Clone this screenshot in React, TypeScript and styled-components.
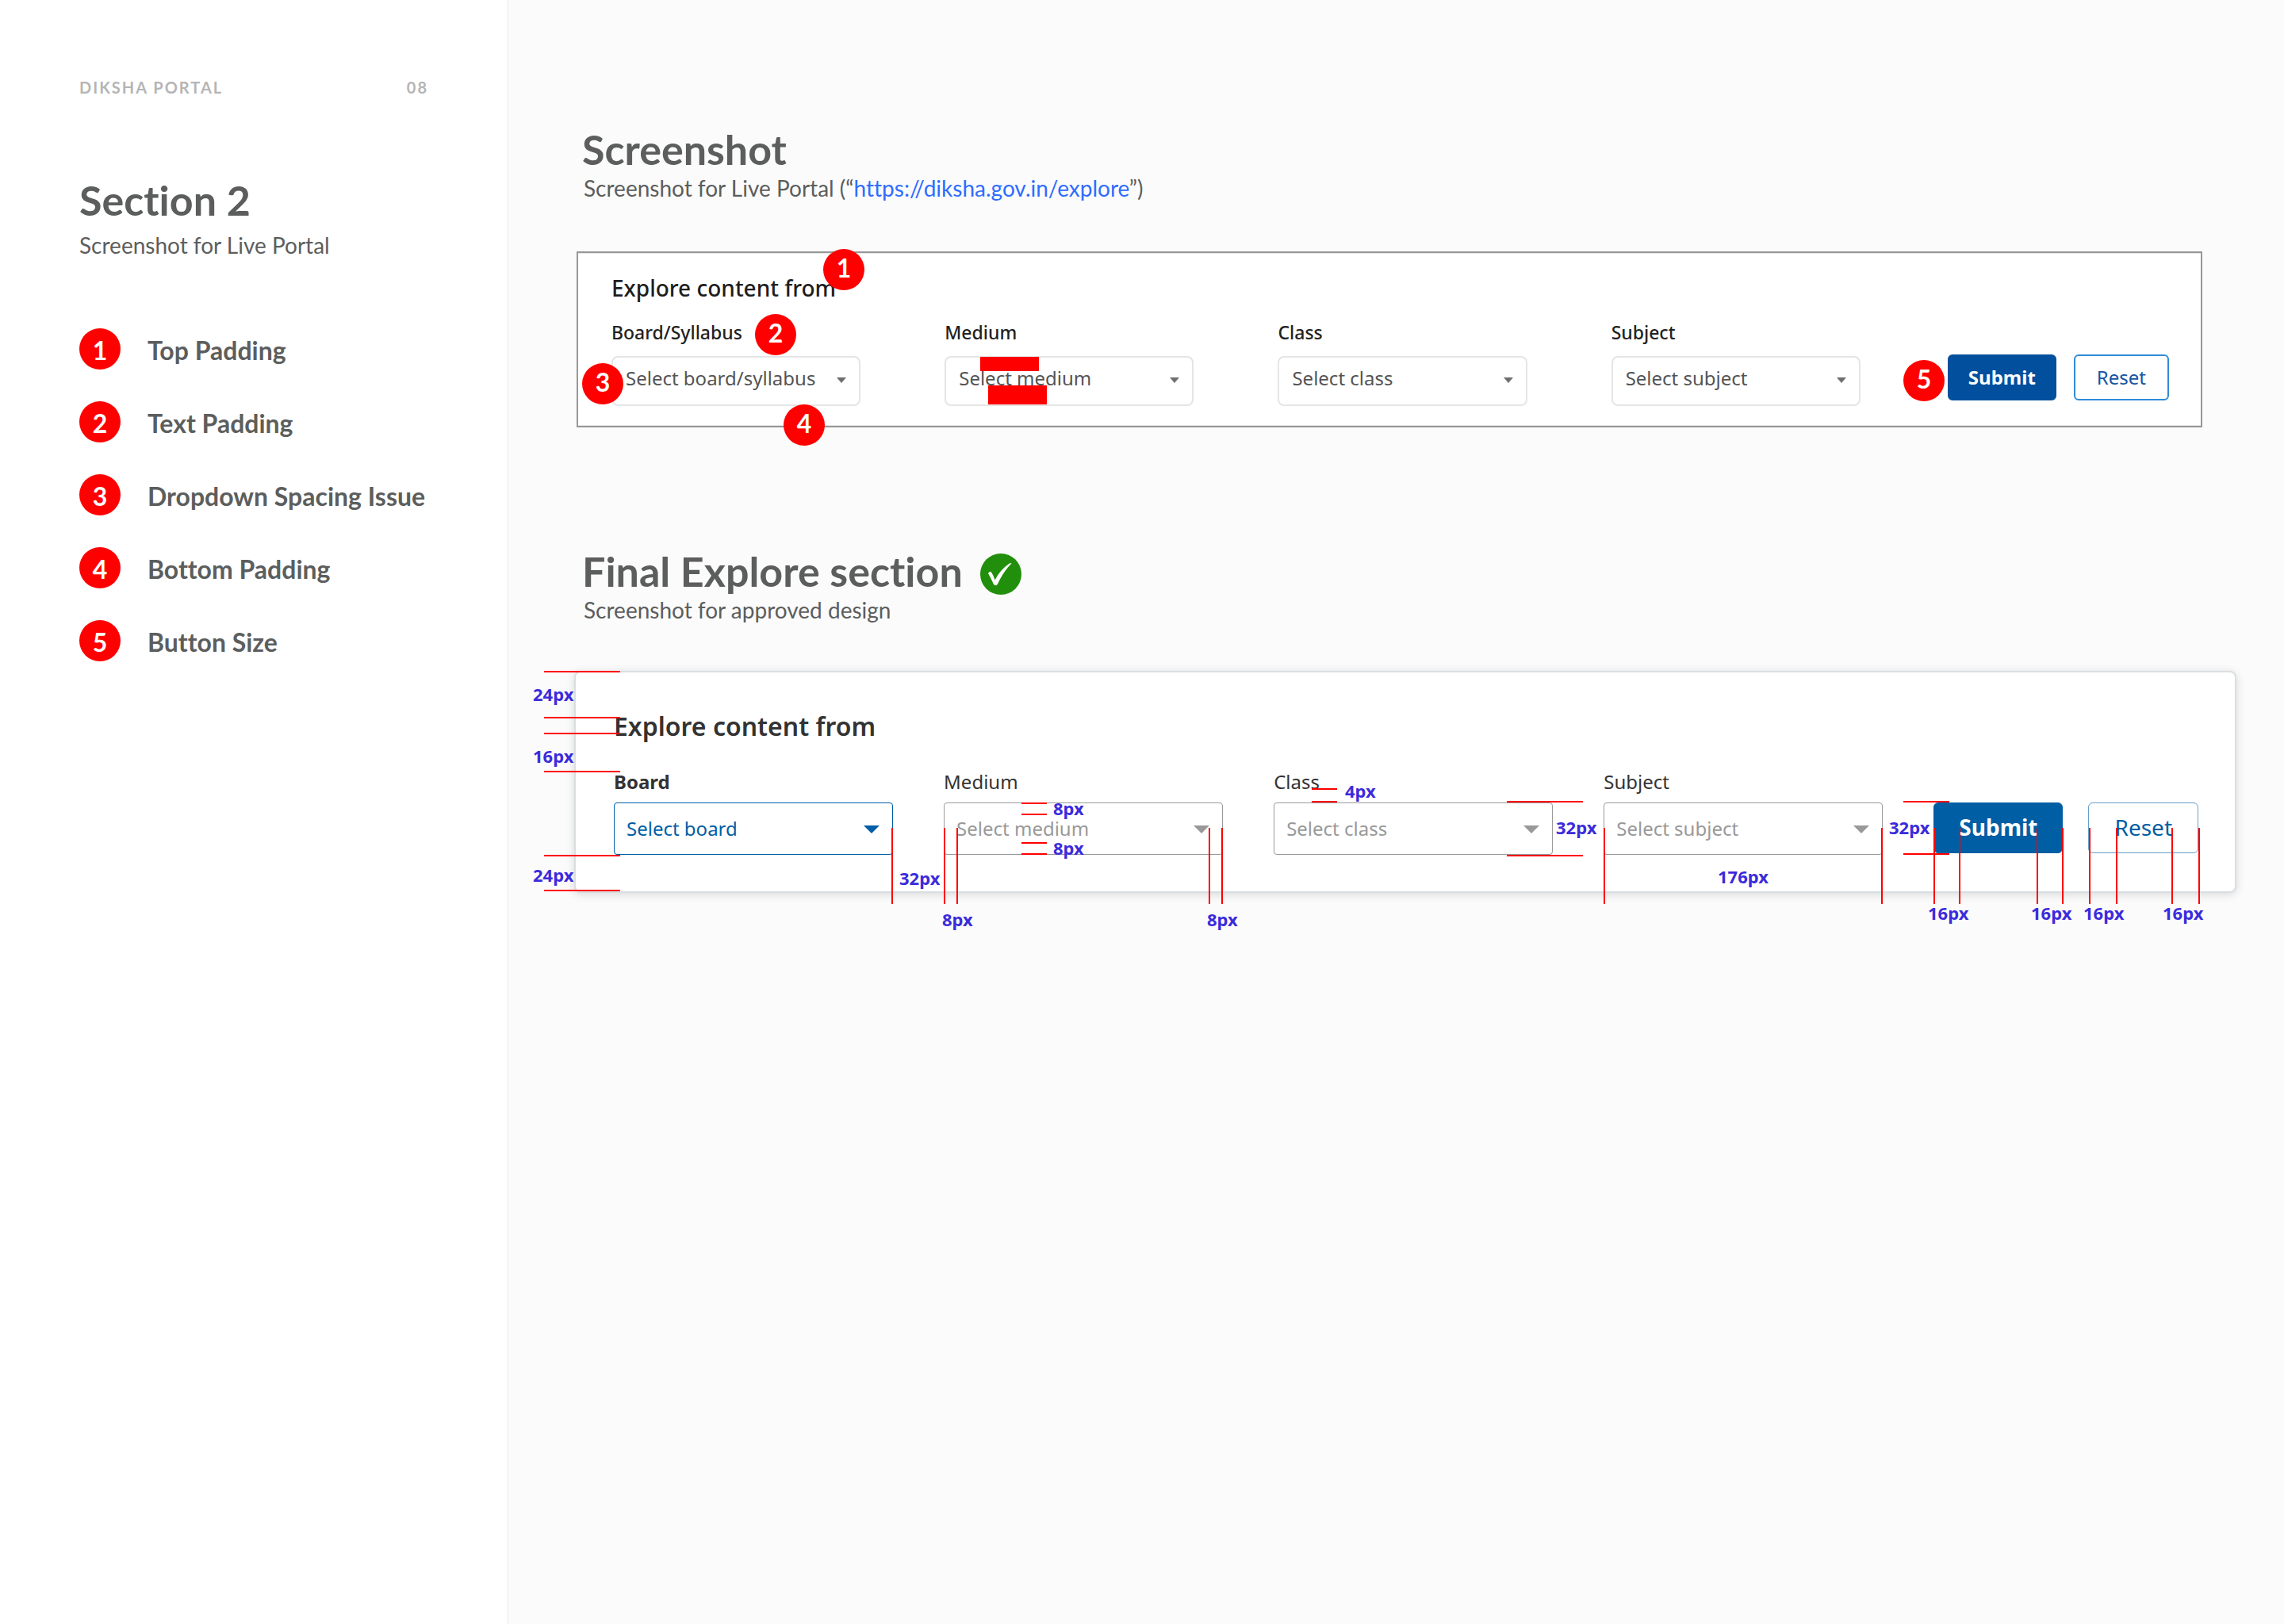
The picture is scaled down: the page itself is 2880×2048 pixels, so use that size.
import React from "react";
import styled, { createGlobalStyle, css } from "styled-components";

const GlobalStyle = createGlobalStyle`
  *, *::before, *::after { box-sizing: border-box; }
  body {
    margin: 0;
    background: #fbfbfb;
    font-family: Lato, "Liberation Sans", sans-serif;
    font-variant-ligatures: none;
    color: #5c5e5d;
  }
  h1, h2, h3, p, ol { margin: 0; padding: 0; }
`;

const noto = `"Noto Sans", "Open Sans", sans-serif`;

const Page = styled.div`
  display: flex;
  min-height: 100vh;
`;

/* ---------- sidebar ---------- */

const Sidebar = styled.aside`
  flex: none;
  width: 641px;
  padding: 98px 100px;
  background: #fff;
  border-right: 1px solid #ececec;
`;

const RunningHead = styled.div`
  display: flex;
  justify-content: space-between;
  margin-bottom: 98px;
  font-size: 20px;
  font-weight: 700;
  line-height: 24px;
  letter-spacing: 2px;
  color: #b5b5b5;
`;

const Title = styled.h2`
  font-size: 52px;
  font-weight: 700;
  line-height: 64px;
`;

const Subtitle = styled.p`
  font-size: 28px;
  line-height: 34px;
`;

const SidebarSubtitle = styled(Subtitle)`
  margin: 8px 0 88px;
`;

const IssueList = styled.ol`
  display: flex;
  flex-direction: column;
  gap: 40px;
  list-style: none;
`;

const IssueItem = styled.li`
  display: flex;
  gap: 34px;
  height: 52px;
  font-size: 32px;
  font-weight: 700;
  line-height: 56px;
  white-space: nowrap;
`;

const Badge = styled.span`
  flex: none;
  width: 52px;
  height: 52px;
  border-radius: 50%;
  background: #f00;
  color: #fff;
  font-size: 32px;
  font-weight: 700;
  text-align: center;
`;

/* ---------- main column ---------- */

const Main = styled.main`
  flex: 1;
  min-width: 0;
  padding: 156px 60px 100px 83px;
`;

const Block = styled.section`
  & + & { margin-top: 149px; }
`;

const BlockHead = styled.header`
  padding-left: 10px;
  margin-bottom: 60px;
`;

const TitleRow = styled.div`
  display: flex;
  align-items: flex-end;
  gap: 22px;
`;

const BlockSubtitle = styled(Subtitle)`
  padding-left: 2px;
`;

const Link = styled.a`
  color: #2f6cff;
  text-decoration: none;
`;

const CheckMark = styled.svg`
  width: 52px;
  height: 52px;
  margin-bottom: 2px;
`;

/* ---------- explore panels ---------- */

type Look = "live" | "final";

const Panel = styled.div<{ $look: Look }>`
  position: relative;
  background: #fff;
  font-family: ${noto};
  ${({ $look }) =>
    $look === "live"
      ? css`
          margin: 63px 43px 0 3px;
          padding: 24px 40px 25px 42px;
          border: 2px solid #979797;
          box-shadow: inset 0 1px #e6e6e6, inset 0 -1px #e6e6e6;
        `
      : css`
          padding: 48px 46px 46px 48px;
          border: 2px solid #d9dee2;
          border-radius: 8px;
          box-shadow: 0 2px 12px rgba(0, 0, 0, 0.14);
        `}
`;

const PanelTitle = styled.h3<{ $look: Look }>`
  line-height: 40px;
  ${({ $look }) =>
    $look === "live"
      ? css`
          margin-bottom: 20px;
          font-size: 28px;
          font-weight: 500;
          color: #1e1e1e;
        `
      : css`
          margin-bottom: 34px;
          font-size: 32px;
          font-weight: 600;
          color: #333;
        `}
`;

const FilterForm = styled.form<{ $look: Look }>`
  display: grid;
  grid-template-columns: repeat(4, minmax(0, 1fr)) auto;
  align-items: end;
  column-gap: ${({ $look }) => ($look === "live" ? 106 : 64)}px;
`;

const Field = styled.div<{ $look: Look }>`
  display: flex;
  flex-direction: column;
  gap: ${({ $look }) => ($look === "live" ? 14 : 10)}px;
`;

const FieldLabel = styled.label<{ $look: Look; $active: boolean }>`
  font-size: ${({ $look }) => ($look === "live" ? 23 : 24)}px;
  line-height: 32px;
  font-weight: ${({ $look, $active }) => ($active ? 700 : $look === "live" ? 500 : 400)};
  color: ${({ $look }) => ($look === "live" ? "#222" : "#333")};
`;

const SelectWrap = styled.div`
  position: relative;
  display: flex;
`;

const Select = styled.select<{ $look: Look; $active: boolean }>`
  appearance: none;
  width: 100%;
  margin: 0;
  background: #fff;
  font-family: ${noto};
  font-size: 24px;
  ${({ $look, $active }) =>
    $look === "live"
      ? css`
          height: 63px;
          padding: 0 40px 8px 16px;
          border: 2px solid #e5e5e5;
          border-radius: 8px;
          color: #545454;
        `
      : css`
          height: 66px;
          padding: 0 44px 2px 15px;
          border: 1px solid ${$active ? "#005ea5" : "#999"};
          border-radius: 4px;
          color: ${$active ? "#005ea5" : "#999"};
        `}
`;

const Caret = styled.svg<{ $look: Look; $active: boolean }>`
  position: absolute;
  pointer-events: none;
  ${({ $look, $active }) =>
    $look === "live"
      ? css`
          top: 27px;
          right: 18px;
          width: 12px;
          height: 7px;
          fill: #6e6e6e;
        `
      : css`
          top: 29px;
          right: 17px;
          width: 20px;
          height: 10px;
          fill: ${$active ? "#005ea5" : "#999"};
        `}
`;

const Actions = styled.div<{ $look: Look }>`
  display: flex;
  ${({ $look }) =>
    $look === "live"
      ? css`
          gap: 22px;
          margin: 0 0 7px 4px;
        `
      : css`
          gap: 32px;
          margin-bottom: 2px;
        `}
`;

const Button = styled.button<{ $look: Look; $primary?: boolean }>`
  margin: 0;
  border-radius: 6px;
  border-style: solid;
  font-family: ${noto};
  font-weight: ${({ $primary }) => ($primary ? 700 : 400)};
  ${({ $look, $primary }) =>
    $look === "live"
      ? css`
          height: 58px;
          padding: 0 ${$primary ? 24 : 27}px 2px;
          border-width: 2px;
          border-color: ${$primary ? "#024f9d" : "#2f8bd8"};
          background: ${$primary ? "#024f9d" : "#fff"};
          color: ${$primary ? "#fff" : "#1454a2"};
          font-size: 24px;
        `
      : css`
          height: 64px;
          padding: 0 ${$primary ? 31 : 32}px 2px;
          border-width: 1px;
          border-color: ${$primary ? "#005ea5" : "#669ec9"};
          background: ${$primary ? "#005ea5" : "#fff"};
          color: ${$primary ? "#fff" : "#005ea5"};
          font-size: 28px;
        `}
`;

/* ---------- annotations laid over the panels ---------- */

type Spot = { $x: number; $y: number };

const Pin = styled(Badge)<Spot>`
  position: absolute;
  left: ${({ $x }) => $x}px;
  top: ${({ $y }) => $y}px;
  font-family: Lato, sans-serif;
  line-height: 48px;
`;

const Strip = styled.span<Spot & { $w: number; $h: number }>`
  position: absolute;
  left: ${({ $x }) => $x}px;
  top: ${({ $y }) => $y}px;
  width: ${({ $w }) => $w}px;
  height: ${({ $h }) => $h}px;
  background: #f00;
`;

const Measure = styled.span<Spot>`
  position: absolute;
  left: ${({ $x }) => $x}px;
  top: ${({ $y }) => $y}px;
  font-size: 22px;
  font-weight: 700;
  line-height: 22px;
  color: #3b2bdb;
`;

const issues = [
  "Top Padding",
  "Text Padding",
  "Dropdown Spacing Issue",
  "Bottom Padding",
  "Button Size",
];

const pins = [
  [309, -5],
  [223, 77],
  [5, 139],
  [259, 191],
  [1671, 135],
];

const blocks = [
  [507, 131, 74, 18],
  [517, 167, 74, 24],
];

// x, y, length
const rules = [
  [-40, -2, 96],
  [-40, 56, 96],
  [-40, 76, 96],
  [-40, 124, 96],
  [-40, 230, 96],
  [-40, 274, 96],
  [562, 164, 32],
  [562, 178, 32],
  [562, 214, 32],
  [562, 228, 32],
  [928, 146, 32],
  [928, 162, 32],
  [1174, 162, 96],
  [1174, 230, 96],
  [1674, 162, 58],
  [1674, 228, 58],
];

const uprights = [
  398, 464, 480, 798, 814, 1296, 1646, 1712, 1744, 1842, 1874, 1908, 1942, 2012, 2046,
];

const measures: [string, number, number][] = [
  ["24px", -54, 16],
  ["16px", -54, 94],
  ["24px", -54, 244],
  ["32px", 408, 248],
  ["8px", 462, 300],
  ["8px", 796, 300],
  ["8px", 602, 160],
  ["8px", 602, 210],
  ["4px", 970, 138],
  ["32px", 1236, 184],
  ["176px", 1440, 246],
  ["32px", 1656, 184],
  ["16px", 1705, 292],
  ["16px", 1835, 292],
  ["16px", 1901, 292],
  ["16px", 2001, 292],
];

function Explore({
  look,
  fields,
  active,
  children,
}: {
  look: Look;
  fields: [string, string][];
  active?: string;
  children: React.ReactNode;
}) {
  return (
    <Panel $look={look}>
      <PanelTitle $look={look}>Explore content from</PanelTitle>
      <FilterForm $look={look} onSubmit={(e) => e.preventDefault()}>
        {fields.map(([name, hint]) => {
          const id = `${look}-${name}`;
          const on = name === active;
          return (
            <Field key={name} $look={look}>
              <FieldLabel htmlFor={id} $look={look} $active={on}>
                {name}
              </FieldLabel>
              <SelectWrap>
                <Select id={id} $look={look} $active={on}>
                  <option>{hint}</option>
                </Select>
                <Caret $look={look} $active={on} viewBox="0 0 20 10" preserveAspectRatio="none">
                  <path d="M0 0H20L10 10Z" />
                </Caret>
              </SelectWrap>
            </Field>
          );
        })}
        <Actions $look={look}>
          <Button type="submit" $look={look} $primary>
            Submit
          </Button>
          <Button type="reset" $look={look}>
            Reset
          </Button>
        </Actions>
      </FilterForm>
      {children}
    </Panel>
  );
}

export default function App() {
  return (
    <Page>
      <GlobalStyle />
      <Sidebar>
        <RunningHead>
          <span>DIKSHA PORTAL</span>
          <span>08</span>
        </RunningHead>
        <Title as="h1">Section 2</Title>
        <SidebarSubtitle>Screenshot for Live Portal</SidebarSubtitle>
        <IssueList>
          {issues.map((text, i) => (
            <IssueItem key={text}>
              <Badge>{i + 1}</Badge>
              {text}
            </IssueItem>
          ))}
        </IssueList>
      </Sidebar>

      <Main>
        <Block>
          <BlockHead>
            <Title>Screenshot</Title>
            <BlockSubtitle>
              Screenshot for Live Portal (“
              <Link href="https://diksha.gov.in/explore">https://diksha.gov.in/explore</Link>
              ”)
            </BlockSubtitle>
          </BlockHead>
          <Explore
            look="live"
            fields={[
              ["Board/Syllabus", "Select board/syllabus"],
              ["Medium", "Select medium"],
              ["Class", "Select class"],
              ["Subject", "Select subject"],
            ]}
          >
            {blocks.map(([x, y, w, h]) => (
              <Strip key={y} $x={x} $y={y} $w={w} $h={h} />
            ))}
            {pins.map(([x, y], i) => (
              <Pin key={i} $x={x} $y={y}>
                {i + 1}
              </Pin>
            ))}
          </Explore>
        </Block>

        <Block>
          <BlockHead>
            <TitleRow>
              <Title>Final Explore section</Title>
              <CheckMark viewBox="0 0 52 52" aria-hidden="true">
                <circle cx="26" cy="26" r="26" fill="#228f0c" />
                <path
                  fill="#fff"
                  d="M10 25Q12 22 14 23.500Q17 28 18.500 33.500Q26 19 38 12L39.500 12.500Q29 23 22.500 37.500Q21.500 40.200 19.500 40.200Q17.500 40.200 16.500 38Q13 30 10 25Z"
                />
              </CheckMark>
            </TitleRow>
            <BlockSubtitle>Screenshot for approved design</BlockSubtitle>
          </BlockHead>
          <Explore
            look="final"
            active="Board"
            fields={[
              ["Board", "Select board"],
              ["Medium", "Select medium"],
              ["Class", "Select class"],
              ["Subject", "Select subject"],
            ]}
          >
            {rules.map(([x, y, w]) => (
              <Strip key={`${x}-${y}`} $x={x} $y={y} $w={w} $h={2} />
            ))}
            {uprights.map((x) => (
              <Strip key={x} $x={x} $y={196} $w={2} $h={96} />
            ))}
            {measures.map(([text, x, y]) => (
              <Measure key={`${x}-${y}`} $x={x} $y={y}>
                {text}
              </Measure>
            ))}
          </Explore>
        </Block>
      </Main>
    </Page>
  );
}
